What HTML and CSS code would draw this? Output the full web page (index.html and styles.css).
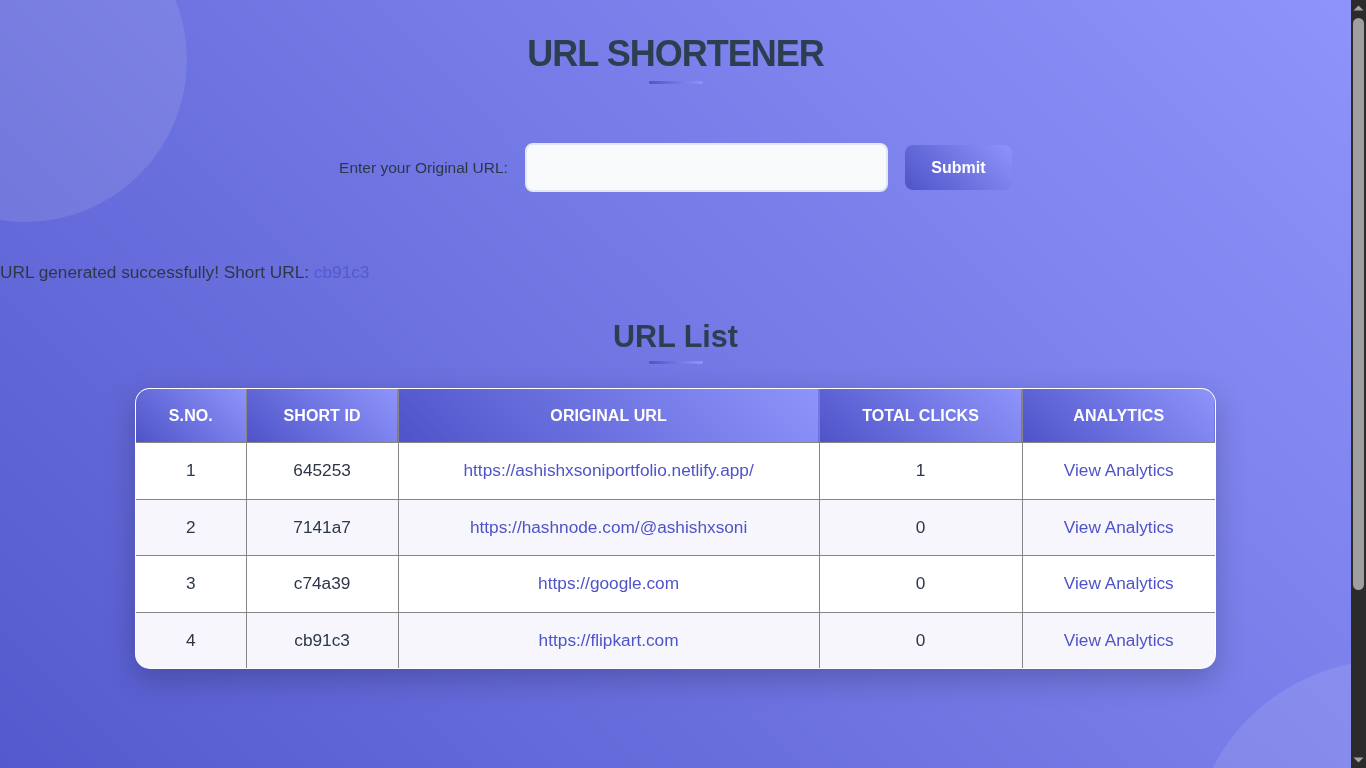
FILE: index.html
```html
<!DOCTYPE html>
<html lang="en">
<head>
<meta charset="utf-8">
<title>URL Shortener</title>
<link rel="stylesheet" href="styles.css">
</head>
<body>
<div class="circle circle-tl"></div>
<div class="circle circle-br"></div>
<main class="page">
  <header class="hero">
    <h1 class="title">URL SHORTENER</h1>
    <div class="bar"></div>
  </header>

  <form class="form">
    <label class="form-label" for="url">Enter your Original URL:</label>
    <input class="form-input" id="url" type="text">
    <button class="form-btn" type="button">Submit</button>
  </form>

  <p class="msg">URL generated successfully! Short URL: <a class="msg-link" href="#">cb91c3</a></p>

  <section class="list">
    <h2 class="list-title">URL List</h2>
    <div class="bar"></div>
    <div class="table-wrap">
      <table class="table">
        <colgroup>
          <col class="c1"><col class="c2"><col class="c3"><col class="c4"><col class="c5">
        </colgroup>
        <thead>
          <tr><th>S.No.</th><th>Short ID</th><th>Original URL</th><th>Total Clicks</th><th>Analytics</th></tr>
        </thead>
        <tbody>
          <tr><td>1</td><td>645253</td><td><a href="#">https://ashishxsoniportfolio.netlify.app/</a></td><td>1</td><td><a href="#">View Analytics</a></td></tr>
          <tr><td>2</td><td>7141a7</td><td><a href="#">https://hashnode.com/@ashishxsoni</a></td><td>0</td><td><a href="#">View Analytics</a></td></tr>
          <tr><td>3</td><td>c74a39</td><td><a href="#">https://google.com</a></td><td>0</td><td><a href="#">View Analytics</a></td></tr>
          <tr><td>4</td><td>cb91c3</td><td><a href="#">https://flipkart.com</a></td><td>0</td><td><a href="#">View Analytics</a></td></tr>
        </tbody>
      </table>
    </div>
  </section>
</main>
<div class="scrollbar" aria-hidden="true">
  <svg class="sb-arrow" width="15" height="15" viewBox="0 0 15 15"><polygon points="2.5,10.5 12.5,10.5 7.5,5.5" fill="#a3a3a3"/></svg>
  <div class="sb-thumb"></div>
  <div class="sb-space"></div>
  <svg class="sb-arrow" width="15" height="15" viewBox="0 0 15 15"><polygon points="2.5,4.5 12.5,4.5 7.5,9.5" fill="#a3a3a3"/></svg>
</div>
</body>
</html>
```

FILE: styles.css
```css
html, body {
  margin: 0;
  padding: 0;
}

body {
  font-family: "Liberation Sans", Arial, sans-serif;
  font-size: 17.25px;
  color: #2d3748;
  background: linear-gradient(45deg, #4e54c8, #8f94fb);
  min-height: 100vh;
  position: relative;
  overflow-x: hidden;
}

/* decorative circles */
.circle {
  border-radius: 50%;
  background: rgba(255, 255, 255, 0.1);
  z-index: 0;
  pointer-events: none;
}

.circle-tl {
  position: absolute;
  width: 324px;
  height: 324px;
  left: -137px;
  top: -102px;
}

.circle-br {
  position: fixed;
  width: 400px;
  height: 400px;
  right: -224px;
  bottom: -292px;
}

/* window scrollbar (overlay) */
.scrollbar {
  position: fixed;
  top: 0;
  right: 0;
  width: 15px;
  height: 100vh;
  background: #2b2b2b;
  display: flex;
  flex-direction: column;
  align-items: center;
  z-index: 5;
}

.sb-arrow {
  display: block;
  flex: none;
}

.sb-thumb {
  flex: none;
  width: 11px;
  height: 572px;
  margin-top: 3px;
  border-radius: 6px;
  background: #9f9f9f;
}

.sb-space {
  flex: 1;
}

/* page */
.page {
  position: relative;
  z-index: 1;
  margin-right: 15px;
  padding: 32px 0 322px;
}

.hero {
  display: flex;
  flex-direction: column;
  align-items: center;
}

.title {
  margin: 0;
  font-size: 36px;
  line-height: 43px;
  font-weight: 700;
  letter-spacing: -1px;
  color: #2c3e50;
}

.bar {
  width: 54px;
  height: 3px;
  border-radius: 2px;
  background: linear-gradient(90deg, #4e54c8, #8f94fb);
}

.hero .bar {
  margin-top: 6px;
}

.form {
  display: flex;
  align-items: center;
  justify-content: center;
  gap: 17px;
  margin-top: 59px;
}

.form-label {
  font-size: 15.5px;
  color: #2d3748;
}

.form-input {
  box-sizing: border-box;
  width: 363px;
  height: 49px;
  border: 2px solid #e2e8f0;
  border-radius: 8px;
  background: #f8fafc;
  color: #2d3748;
  font-size: 16px;
  padding: 0 12px;
  outline: none;
}

.form-btn {
  box-sizing: border-box;
  width: 107px;
  height: 45px;
  border: none;
  border-radius: 8px;
  background: linear-gradient(45deg, #4e54c8, #8f94fb);
  color: #ffffff;
  font-family: "Liberation Sans", Arial, sans-serif;
  font-size: 16px;
  font-weight: 700;
  cursor: pointer;
}

.msg {
  margin: 70px 0 0;
  font-size: 17.25px;
  line-height: 20px;
  color: #2d3748;
}

.msg-link {
  color: #5459cf;
  text-decoration: none;
}

.list {
  margin-top: 36px;
  display: flex;
  flex-direction: column;
  align-items: center;
}

.list-title {
  margin: 0;
  font-size: 30.5px;
  line-height: 36px;
  font-weight: 700;
  color: #2c3e50;
}

.list .bar {
  margin-top: 7px;
}

.table-wrap {
  box-sizing: border-box;
  width: 80%;
  margin-top: 24px;
  border: 1px solid rgba(255, 255, 255, 0.9);
  border-radius: 15px;
  overflow: hidden;
  background: #ffffff;
  box-shadow: 0 10px 30px rgba(0, 0, 0, 0.22);
}

.table {
  width: 100%;
  border-collapse: collapse;
  border-style: hidden;
  table-layout: fixed;
}

.c1 { width: 110px; }
.c2 { width: 152px; }
.c3 { width: 421px; }
.c4 { width: 203px; }
.c5 { width: auto; }

.table th,
.table td {
  border: 1px solid #858585;
  text-align: center;
}

.table th {
  padding: 17px 8px;
  line-height: 19px;
  font-size: 16px;
  font-weight: 700;
  letter-spacing: 0.1px;
  text-transform: uppercase;
  color: #ffffff;
  background: linear-gradient(45deg, #4e54c8, #8f94fb);
}

.table td {
  padding: 18px 8px;
  line-height: 19.5px;
  font-size: 17.25px;
  color: #2d3748;
  background: #ffffff;
}

.table tbody tr:nth-child(even) td {
  background: #f6f6fc;
}

.table a {
  color: #4e54c8;
  text-decoration: none;
}
```
